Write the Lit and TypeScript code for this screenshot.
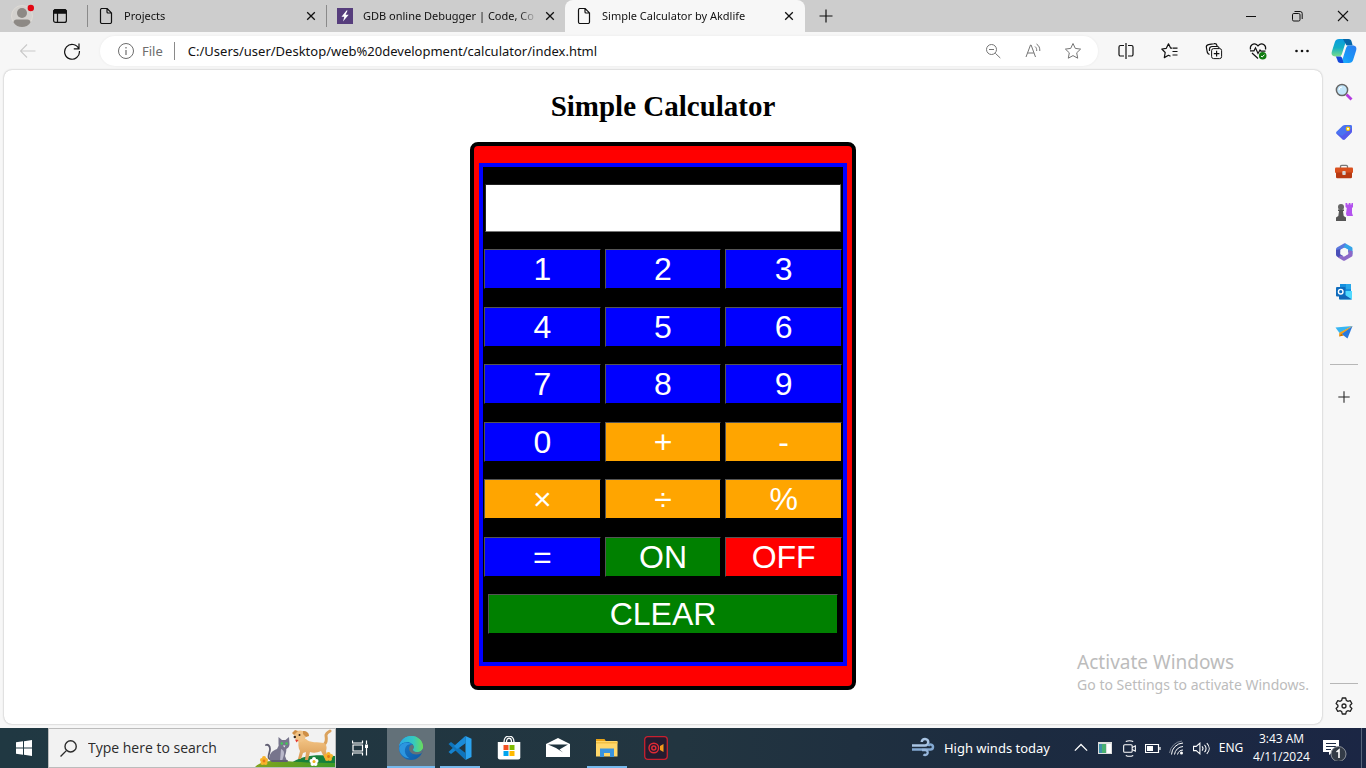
import { LitElement, html, css, svg } from "lit";
import { customElement, property, state } from "lit/decorators.js";
import { classMap } from "lit/directives/class-map.js";

const icon = (size: number, body: unknown, view = 16) => html`
  <svg class="icon" width=${size} height=${size} viewBox="0 0 ${view} ${view}" fill="none"
    stroke="currentColor" stroke-width="1" aria-hidden="true">${body}</svg>`;

const shared = css`
  :host, * { box-sizing: border-box; }
  .icon { display: block; flex: none; }
  button {
    font: inherit; color: inherit; background: none; border: 0; padding: 0; margin: 0;
    display: flex; align-items: center; justify-content: center; flex: none;
  }
  input { font: inherit; color: inherit; border: 0; padding: 0; margin: 0; background: none; outline: 0; min-width: 0; border-radius: 0; }
`;

const glyph = {
  page: svg`<path d="M3.500 .5h5.600l4.400 4.400v9.100a1.500 1.500 0 0 1-1.500 1.500H4A1.500 1.500 0 0 1 2.500 14V2A1.500 1.500 0 0 1 4 .5M9 .7v3.300a1 1 0 0 0 1 1h3.400" stroke-width="1.200"/>`,
  bolt: svg`<rect width="16" height="16" fill="#563d7c" stroke="none"/><path d="M9.500 2.500 4.500 8.700h2.800L6 13.600l5.700-6.800H8.600l2-4.300z" fill="#fff" stroke="none"/>`,
  close: svg`<path d="m4.200 4.200 7.600 7.600m0-7.600-7.600 7.600" stroke-width="1.300"/>`,
  plus: svg`<path d="M8 1.500v13M1.500 8h13" stroke-width="1.200"/>`,
};

@customElement("calc-pad")
export class CalcPad extends LitElement {
  @state() private value = "";
  @state() private on = true;

  static styles = [shared, css`
    :host {
      display: block; width: 386px; max-width: 100%; background: red; color: white;
      border: 4px solid black; border-radius: 8px; padding: 17px 5px 20px;
      font: 32px/38px "Liberation Sans", Arial, sans-serif;
    }
    .body { background: black; border: 4px solid blue; padding: 17px 1px 28px; }
    .display {
      display: block; width: calc(100% - 2px); height: 48px; margin: 0 1px 17px;
      background: white; color: black; border: 1px inset #767676; text-align: right;
    }
    .keys {
      display: grid; grid-template-columns: repeat(3, 1fr); grid-auto-rows: 40px;
      column-gap: 4px; height: 385px; align-content: space-between;
    }
    .key { border: 1px outset black; background: blue; }
    .operator { background: orange; }
    .go { background: green; }
    .stop { background: red; }
    .wide { grid-column: 1 / -1; margin: 0 4px; }
  `];

  private press(key: string) {
    if (key === "ON") { this.on = true; return; }
    if (key === "OFF") { this.on = false; this.value = ""; return; }
    if (!this.on) return;
    if (key === "CLEAR") this.value = "";
    else if (key === "=") this.value = this.evaluate();
    else this.value += key;
  }

  private evaluate(): string {
    const tokens = this.value.match(/\d+|[+\-×÷%]/g);
    if (!tokens) return "";
    let total = Number(tokens[0]);
    for (let i = 1; i + 1 < tokens.length; i += 2) {
      const n = Number(tokens[i + 1]);
      if (tokens[i] === "+") total += n;
      else if (tokens[i] === "-") total -= n;
      else if (tokens[i] === "×") total *= n;
      else if (tokens[i] === "÷") total /= n;
      else total %= n;
    }
    return String(total);
  }

  render() {
    const keys = ["1", "2", "3", "4", "5", "6", "7", "8", "9", "0", "+", "-", "×", "÷", "%", "=", "ON", "OFF", "CLEAR"];
    return html`<div class="body">
      <input class="display" aria-label="Result" .value=${this.value} readonly>
      <div class="keys">
        ${keys.map((k) => html`<button @click=${() => this.press(k)} class=${classMap({
          key: true,
          operator: "+-×÷%".includes(k),
          go: k === "ON" || k === "CLEAR",
          stop: k === "OFF",
          wide: k === "CLEAR",
        })}>${k}</button>`)}
      </div>
    </div>`;
  }
}

@customElement("browser-tab")
export class BrowserTab extends LitElement {
  @property() label = "";
  @property() kind = "page";
  @property({ type: Boolean, reflect: true }) active = false;

  static styles = [shared, css`
    :host { display: flex; align-items: center; flex: 0 1 239px; height: 32px; min-width: 0; padding: 0 7px 0 10px; border-left: 1px solid #8a8a8a;
      border-image: linear-gradient(transparent 6px, #8a8a8a 6px, #8a8a8a 26px, transparent 26px) 1; border-width: 0 0 0 1px; }
    :host([active]) { background: #f7f7f7; border: 0; border-image: none; border-radius: 8px 8px 0 0; padding: 0 8px 0 11px; flex-basis: 240px; }
    .title { flex: 1; min-width: 0; justify-content: flex-start; margin-left: 10px; overflow: hidden; white-space: nowrap; height: 20px;
      mask-image: linear-gradient(90deg, black calc(100% - 20px), transparent); }
    .close { width: 16px; height: 16px; margin-left: 4px; }
  `];

  render() {
    return html`${icon(16, this.kind === "bolt" ? glyph.bolt : glyph.page)}
      <button class="title">${this.label}</button>
      <button class="close" aria-label="Close ${this.label}">${icon(16, glyph.close)}</button>`;
  }
}

@customElement("tab-strip")
export class TabStrip extends LitElement {
  static styles = [shared, css`
    :host { display: flex; align-items: center; height: 32px; background: #cdcdcd; color: #111; font: 11px/20px "Noto Sans", "Open Sans", sans-serif; }
    .profile { width: 44px; }
    .workspaces { width: 32px; margin-right: 11px; }
    .tabs { display: flex; flex: 0 1 718px; min-width: 0; }
    .new { width: 42px; }
    .window { display: flex; margin-left: auto; }
    .window button { width: 46px; height: 32px; }
  `];

  render() {
    return html`
      <button class="profile" aria-label="Profile">${icon(24, svg`
        <circle cx="12" cy="12" r="10.500" fill="#d3d1ce" stroke="#dedbd6"/>
        <circle cx="12" cy="9" r="5" fill="#8d8985" stroke="none"/>
        <path d="M3.500 18.500c0-2 1.500-3 3-3h11c1.500 0 3 1 3 3-2 3-5 4.500-8.500 4.500s-6.500-1.500-8.500-4.500z" fill="#8d8985" stroke="none"/>
        <circle cx="20.800" cy="4" r="3.200" fill="#e30613" stroke="none"/>`, 24)}</button>
      <button class="workspaces" aria-label="Tab actions">${icon(16, svg`
        <rect x="1.600" y="1.600" width="12.800" height="12.800" rx="2" stroke-width="1.200"/>
        <path d="M1.500 5.200V3.500a2 2 0 0 1 2-2h9a2 2 0 0 1 2 2v1.700z" fill="currentColor"/><path d="M5.500 5v9.500" stroke-width="1.200"/>`)}</button>
      <nav class="tabs">
        <browser-tab label="Projects"></browser-tab>
        <browser-tab label="GDB online Debugger | Code, Co" kind="bolt"></browser-tab>
        <browser-tab label="Simple Calculator by Akdlife" active></browser-tab>
      </nav>
      <button class="new" aria-label="New tab">${icon(16, glyph.plus)}</button>
      <div class="window">
        <button aria-label="Minimize">${icon(16, svg`<path d="M3 8.500h10"/>`)}</button>
        <button aria-label="Restore">${icon(16, svg`<rect x="3.500" y="5.500" width="7.500" height="7.500" rx="1.300"/><path d="M5.500 3.500h5.700a2 2 0 0 1 2 2v5.500"/>`)}</button>
        <button aria-label="Close">${icon(16, svg`<path d="m3 3 10 10m0-10L3 13" stroke-width="1.100"/>`)}</button>
      </div>`;
  }
}

const copilot = svg`
  <defs>
    <linearGradient id="ca" x1="0" y1="0" x2="0" y2="1"><stop stop-color="#0a9be0"/><stop offset=".5" stop-color="#12afc4"/><stop offset="1" stop-color="#79dc8b"/></linearGradient>
    <linearGradient id="cb" x1="1" y1="0" x2="0" y2="1"><stop stop-color="#2b7cf0"/><stop offset=".6" stop-color="#1897f8"/><stop offset="1" stop-color="#20b9ff"/></linearGradient>
  </defs>
  <g stroke="none">
    <path d="M7.500 1H16l-2.500 3L10 15c-.6 1.500-1.500 2-3 2H4c-3 0-4-2-3.200-4.500L3.500 4c.7-2 2-3 4-3z" fill="url(#ca)"/>
    <path d="M11 1h5c2 0 2.700 1 3.200 3l.8 3h-4c-1.500 0-2.200-.5-2.700-2z" fill="#0666a8"/>
    <path d="M16.500 23H8l2.500-3L14 9c.6-1.500 1.500-2 3-2h3c3 0 4 2 3.200 4.500L20.500 20c-.7 2-2 3-4 3z" fill="url(#cb)"/>
    <path d="M4.500 17H8c1.500 0 2 .5 2.500 2l1 4H9c-2 0-2.700-1-3.200-3z" fill="#1448d8"/>
  </g>`;

@customElement("address-bar")
export class AddressBar extends LitElement {
  static styles = [shared, css`
    :host { display: flex; align-items: center; height: 38px; background: #f7f7f7; color: #111; font: 13px/20px "Noto Sans", "Open Sans", sans-serif; }
    .back { width: 56px; color: #c9c9c9; }
    .reload { width: 32px; }
    .field { flex: 1; min-width: 0; display: flex; align-items: center; height: 30px; margin: 0 6px 0 12px; padding: 0 5px 0 17px;
      background: white; border-radius: 15px; box-shadow: 0 0 3px #0000000f; }
    .scheme { display: flex; align-items: center; color: #6d6d6d; gap: 7px; padding-right: 11px; border-right: 1px solid #8a8a8a; line-height: 16px; }
    .url { flex: 1; margin-left: 13px; }
    .inner { width: 40px; color: #757575; }
    .tool { width: 44px; }
    .copilot { width: 42px; justify-content: flex-start; padding-left: 7px; }
  `];

  render() {
    return html`
      <button class="back" aria-label="Back">${icon(16, svg`<path d="M15.500 8H.8M7 1.500.5 8 7 14.500" stroke-width="1.100"/>`)}</button>
      <button class="reload" aria-label="Refresh">${icon(18, svg`<path d="M15.800 6.800A7.400 7.400 0 1 0 16.400 9M16 1.500v5.300h-5.200" stroke-width="1.200"/>`, 18)}</button>
      <div class="field">
        <span class="scheme">${icon(18, svg`<circle cx="9" cy="9" r="7.500"/><path d="M9 8v5M9 5v1.400" stroke-width="1.200"/>`, 18)}File</span>
        <input class="url" aria-label="Address" value="C:/Users/user/Desktop/web%20development/calculator/index.html">
        <button class="inner" aria-label="Zoom out">${icon(16, svg`<circle cx="6.500" cy="6.500" r="5"/><path d="M4 6.500h5m1.300 3.800 5 4.700"/>`)}</button>
        <button class="inner" aria-label="Read aloud">${icon(16, svg`<path d="m1 14 4.500-12h.6L10.500 14M2.600 10h6.200M10 3.500c1.300 1 1.800 2.600 1.700 4.500M11.500 1c2.400 1.600 3.500 3.800 3.300 7"/>`)}</button>
        <button class="inner" aria-label="Favourite">${icon(18, svg`<path d="m9 1.500 2.300 4.900 5.300.7-3.900 3.700 1 5.400L9 13.600l-4.700 2.600 1-5.400L1.400 7.100l5.300-.7z" stroke-linejoin="round"/>`, 18)}</button>
      </div>
      <button class="tool" aria-label="Split screen">${icon(18, svg`<path d="M9 1v16M7 3.500H3.500a1.500 1.500 0 0 0-1.500 1.500v7.500A1.500 1.500 0 0 0 3.500 14H7M11 3.500h3.500A1.500 1.500 0 0 1 16 5v7.500a1.500 1.500 0 0 1-1.500 1.500H11" stroke-width="1.200"/>`, 18)}</button>
      <button class="tool" aria-label="Favourites">${icon(18, svg`<path d="M11.500 6.200h5M11.500 9.500h5M11.500 13h5M11 6.200H9.700L7.500 1.800 5.300 6.300l-4.500.7 3.400 3.500-.9 5.100 4.200-2.300 2 1" stroke-width="1.200" stroke-linejoin="round"/>`, 18)}</button>
      <button class="tool" aria-label="Collections">${icon(18, svg`<rect x="6.600" y="6.600" width="10" height="10" rx="2"/><path d="M11.600 8.800v5.600M8.800 11.600h5.600M4.500 12.500C3 12 2.500 11.300 2.200 10L1.400 5.500C1.100 4 2 2.900 3.500 2.600l5.500-.9c1.500-.3 2.700.4 3 1.900l.1.700M4.500 9V7a2.500 2.500 0 0 1 2.500-2.500h5c1.300 0 2 .5 2.300 1.800" stroke-width="1.200"/>`, 18)}</button>
      <button class="tool" aria-label="Browser essentials">${icon(18, svg`<path d="M1.500 7.500C.5 3.500 4.500 .5 7.500 2.500L9 4l1.500-1.500c3-2 7 1 6 5M1 8.800h4l1.500-3L9 11.500l2-3.500 1 1.200h4.500M3 11l6 5.500" stroke-width="1.200"/><circle cx="13.700" cy="13.700" r="3.800" fill="#107c10" stroke="none"/><path d="m12 14 1.200 1 2.300-2.400" stroke="#fff"/>`, 18)}</button>
      <button class="tool" aria-label="Settings and more">${icon(16, svg`<g fill="currentColor" stroke="none"><circle cx="2.500" cy="8" r="1.300"/><circle cx="8" cy="8" r="1.300"/><circle cx="13.500" cy="8" r="1.300"/></g>`)}</button>
      <button class="copilot" aria-label="Copilot">${icon(26, copilot, 24)}</button>`;
  }
}

const sideIcons: [string, unknown][] = [
  ["Search", svg`<path d="m11.500 11.500 5 5" stroke="#b43be0" stroke-width="2.800"/><circle cx="7" cy="7" r="5.600" fill="#c3e6fa" stroke="#666" stroke-width="1.500"/><path d="M4 7a3 3 0 0 1 3-3" stroke="#fff"/>`],
  ["Shopping", svg`<path d="M10 2h5.500c1 0 1.500.5 1.500 1.500V8c0 1-.3 1.500-1 2.200l-6 6c-.8.800-1.700.8-2.500 0L1.700 11c-.8-.8-.8-1.700 0-2.500l6-5.700C8.400 2.200 9 2 10 2z" fill="#4b73f1" stroke="none"/><path d="m1.300 10 6.500 6.700c.8.300 1.500.2 2.200-.5l6-6c.7-.7 1-1.200 1-2.200V5L7 13z" fill="#6048e8" stroke="none" opacity=".55"/><circle cx="13" cy="5.800" r="1.700" fill="#fff" stroke="#f5c400" stroke-width="1.200"/>`],
  ["Tools", svg`<path d="M5.500 5V3.500c0-.8.400-1.200 1.200-1.200h4.600c.8 0 1.200.4 1.200 1.200V5" stroke="#777" stroke-width="1.300"/><rect y="4.500" width="18" height="5.500" rx="1" fill="#d9501e" stroke="none"/><path d="M1 9.500h16V14a1.300 1.300 0 0 1-1.300 1.300H2.300A1.300 1.300 0 0 1 1 14z" fill="#b83a12" stroke="none"/><rect x="7.300" y="8" width="3.400" height="4" rx=".8" fill="#d5d5d5" stroke="none"/>`],
  ["Games", svg`<g stroke="none"><path d="M10.500 0h1.800v1.500h1.400V0h1.800v1.500h1V0h1.500v4l-1 1v5l1 3h-6l-1-2 .8-6-1.300-1z" fill="#b352ee"/><circle cx="6" cy="4" r="3" fill="#666"/><path d="M3 6.500h6v1.400H8l.7 5 2.300 1.600V18H1v-3.500l2.300-1.600.7-5H3z" fill="#555"/></g>`],
  ["Microsoft 365", svg`<g stroke="none"><path d="M9 .5 2.300 4.300C1.400 4.900 1 5.600 1 6.600V11l4.700-2V7l5.300-3V.8C10.300.2 9.600.2 9 .5z" fill="#5b78dd"/><path d="M1 7v4.500c0 1 .5 1.700 1.300 2.200l2.200 1.200L9 12.500 5.700 11V6z" fill="#4a4fb8"/><path d="m11 .8 5.700 3.300c.5.300.8.800.8 1.500v6L13 9V6.500L8.500 4z" fill="#35a4e8"/><path d="M17.500 8v4.200c0 .8-.4 1.200-1 1.600L10 17.500c-.7.400-1.300.4-2 0l-5-3 2.700-2L9 13.500l4.300-2.500V7z" fill="#8d68c8"/><path d="m9 4.800 3.800 2v4.400L9 13.400l-3.700-2.200V6.800z" fill="#f7f7f7"/></g>`],
  ["Outlook", svg`<g stroke="none"><rect x="5" y="1" width="11" height="10" fill="#1490df"/><path d="M11 1h5v5h-5z" fill="#28a8ea"/><path d="M4 8h13v7.500a1 1 0 0 1-1 1H5a1 1 0 0 1-1-1z" fill="#50d9ff"/><path d="m4 8 13 8.500H5a1 1 0 0 1-1-1z" fill="#1266b7"/><rect x="1" y="4" width="9.500" height="9.500" rx="1" fill="#0f6cbd"/></g><circle cx="5.700" cy="8.700" r="2.300" stroke="#fff" stroke-width="1.400"/>`],
  ["Drop", svg`<g stroke="none"><path d="m.5 4.500 17-1.500-13 7z" fill="#37b5f2"/><path d="m17.500 3-13 7-.3 3.500z" fill="#f0a020"/><path d="m17.500 3-11 8 6 4.500z" fill="#2879df"/><path d="m17.500 3-11 8-2.300 2.500.3-3.800z" fill="#f0a020"/><path d="m4.200 13.500 2.300-2.700 2.200 1.700z" fill="#c66f00"/></g>`],
];

@customElement("side-bar")
export class SideBar extends LitElement {
  static styles = [shared, css`
    :host { display: flex; flex-direction: column; align-items: center; width: 44px; color: #222; padding: 2px 0; }
    .item { width: 40px; height: 40px; }
    .rule { width: 28px; height: 1px; background: #b7b7b7; margin: 12px 0; }
    .foot { margin: auto 0 2px; }
  `];
  render() {
    return html`
      ${sideIcons.map(([name, body]) => html`<button class="item" aria-label=${name}>${icon(18, body, 18)}</button>`)}
      <div class="rule"></div>
      <button class="item" aria-label="Customize">${icon(14, glyph.plus)}</button>
      <div class="rule foot"></div>
      <button class="item" aria-label="Settings">${icon(18, svg`<path d="M7.300 1h3.400l.6 2.400 1.500.9 2.400-.7 1.700 2.900-1.800 1.700v1.600l1.800 1.700-1.700 2.900-2.400-.7-1.500.9-.6 2.400H7.300l-.6-2.400-1.500-.9-2.400.7-1.700-2.900 1.800-1.700V8.200L1.100 6.500l1.700-2.900 2.400.7 1.500-.9z" stroke-width="1.300" stroke-linejoin="round"/><circle cx="9" cy="9" r="2" stroke-width="1.300"/>`, 18)}</button>`;
  }
}

const petScene = html`<svg class="pets" width="80" height="38" viewBox="0 0 80 38" aria-hidden="true">
  <defs>
    <linearGradient id="grass"><stop stop-color="#82a51f"/><stop offset="1" stop-color="#3f9b27"/></linearGradient>
    <linearGradient id="coat" x2="0" y2="1"><stop stop-color="#f2c384"/><stop offset="1" stop-color="#d99a52"/></linearGradient>
  </defs>
  <path d="M34 36c10-10 28-11 46-9v11H34z" fill="#16803c"/>
  <path d="M0 38c6-6 16-7 28-6 14 1 32 2 52 2v4z" fill="url(#grass)"/>
  <path d="M16 31c-5-2-1-7-1-11 0-3-2-5-4-4" fill="none" stroke="#605e72" stroke-width="1.800" stroke-linecap="round"/>
  <path d="M15 32c-2-7 2-10 7-12l2-4h7c1 4 0 8-1 11l2 5z" fill="#77758c"/>
  <path d="m23.500 8 3.500 3h3.500l3.500-3 .5 7c0 3-2 5-5 5s-6-2-6-5z" fill="#77758c"/>
  <path d="M26 20c3 1 4 4 2 9l-1 3h-2z" fill="#b9b8ca"/>
  <path d="M28 16.500h2.500l-1.200 2z" fill="#e8e6f0"/>
  <circle cx="26.800" cy="14.500" r="1.200" fill="#3fce54"/><circle cx="31.500" cy="14.500" r="1.200" fill="#3fce54"/>
  <path d="M17 32h15" stroke="#605e72" stroke-width="2" stroke-linecap="round"/>
  <path d="M68 16c5-2 3-7 3-10 1-3 3-3 4-4" fill="none" stroke="#dba25c" stroke-width="3" stroke-linecap="round"/>
  <path d="M44 10h7c3 4 13 3 18 4 3 2 3 5 2 8l2 8h-3l-4-8c-4 2-8 2-11 1l-2 8h-3l1-8-3 1-2 6h-3l2-8c-2-3-2-8-1-12z" fill="url(#coat)"/>
  <path d="M39 5c1-4 9-5 11-1 2 5-1 9-5 9-2 0-3-1-4-2z" fill="#f0c285"/>
  <path d="m39 6-2-2 3-3 3 1zM48 2c4 0 6 2 6 5l-3 1-3-3z" fill="#cf8f46"/>
  <circle cx="44.500" cy="6" r="1" fill="#30241c"/><circle cx="39.800" cy="8" r="1.200" fill="#30241c"/><path d="m40 10.500 1.500 3 2-2.500z" fill="#e43c32"/>
  <g fill="#f7b32b"><circle cx="7" cy="31" r="2"/><circle cx="11" cy="31" r="2"/><circle cx="9" cy="29" r="2"/><circle cx="7.500" cy="34" r="2"/><circle cx="10.500" cy="34" r="2"/>
  <circle cx="71" cy="27" r="2"/><circle cx="76" cy="27" r="2"/><circle cx="73.500" cy="25" r="2"/><circle cx="72" cy="30" r="2"/><circle cx="75" cy="30" r="2"/></g>
  <circle cx="9" cy="32" r="1.400" fill="#e77817"/><circle cx="73.500" cy="27.500" r="1.400" fill="#e77817"/>
  <g fill="#fff"><circle cx="56.500" cy="32" r="2"/><circle cx="61.500" cy="32" r="2"/><circle cx="59" cy="30" r="2"/><circle cx="57.500" cy="35" r="2"/><circle cx="60.500" cy="35" r="2"/></g><circle cx="59" cy="32.500" r="1.500" fill="#f2b51c"/>
</svg>`;

const apps: [string, string, unknown][] = [
  ["Edge", "active", svg`<defs><linearGradient id="ea" x1="0" y1=".3" x2="1" y2=".3"><stop stop-color="#2aa9e8"/><stop offset=".6" stop-color="#35c9c0"/><stop offset="1" stop-color="#6bdc5a"/></linearGradient><linearGradient id="eb" x2="1" y2="1"><stop stop-color="#1b7fd0"/><stop offset="1" stop-color="#0f5aa5"/></linearGradient></defs>
    <g stroke="none"><circle cx="12" cy="12" r="12" fill="url(#eb)"/><path d="M.2 10C1.500 4 6.500 0 12.200 0 19 0 24 5 24 10.800c0 3.300-2.800 5.200-5.600 5.200-2.700 0-4.300-1-4.300-2.200 0-.7.900-1.100.9-2.800C15 8 11.500 6 8 6 4.500 6 1.500 7.500.2 10z" fill="url(#ea)"/><path d="M8.500 9c-4 3-3.500 10 2 13.300-5.500 0-10.200-4.500-10.300-10C.5 9 4 6.500 8 6.700c2 .1 4 .8 5.200 1.800C11.500 8 9.800 8.100 8.500 9z" fill="#2c96df"/><path d="M13.200 8.500c-3 1-4 4-2.200 7 1.800 3 6.500 4.200 11.500 1.800l1.500-3V11c0 3.300-2.800 5-5.600 5-2.700 0-4.300-1-4.300-2.200 0-.7.900-1.100.9-2.800 0-1-.7-2-1.800-2.500z" fill="#637179"/><path d="M.2 10C1.500 4 6.500 0 12.200 0 19 0 24 5 24 10.800c0 3.300-2.800 5.200-5.600 5.200-2.700 0-4.300-1-4.300-2.200 0-.7.900-1.100.9-2.800C15 8 11.500 6 8 6 4.500 6 1.500 7.500.2 10z" fill="url(#ea)"/></g>`],
  ["Visual Studio Code", "open", svg`<g stroke="none"><path d="m17.500 0 6 2.700V21l-6 3z" fill="#2aa3f0"/><path d="M17.500 0v7L3 18 .5 16z" fill="#1583cf"/><path d="m.5 8 2.500-2 14.500 11v7z" fill="#0f75bd"/><path d="M17.500 0v7L9 13l-3-3z" fill="#1b8bd8"/></g>`],
  ["Store", "", svg`<g stroke="none"><path d="M.8 6h22.500v15.500a2 2 0 0 1-2 2h-18.500a2 2 0 0 1-2-2z" fill="#fff"/><path fill="#f25022" d="M6.500 9h5v5h-5z"/><path fill="#7fba00" d="M12.500 9h5v5h-5z"/><path fill="#00a4ef" d="M6.500 15h5v5h-5z"/><path fill="#ffb900" d="M12.500 15h5v5h-5z"/></g><path d="M7 6c0-8 10-8 10 0M9.500 6c0-5 5-5 5 0" stroke="#fff" stroke-width="1.300"/>`],
  ["Mail", "", svg`<g stroke="none"><path d="m0 8 12-6 12 6v13H0z" fill="#fff"/><path d="M2 8.500h20l-8.500 5 3.500 3-7-4.500z" fill="#20343f"/></g>`],
  ["File Explorer", "open", svg`<g stroke="none"><path d="M1 3h8.500l1.500 2.500H1z" fill="#e8a317"/><path d="M1 5h21.500v15.500H1z" fill="#ffd76a"/><path d="M1 6h21.500v1.500H1z" fill="#f0bf45"/><path d="M5 12.500h14V21h-4v-4H9v4H5z" fill="#3a94df"/></g>`],
  ["Recorder", "", svg`<rect x=".7" y=".7" width="22.600" height="22.600" rx="3" fill="#251c30" stroke="#c8202f" stroke-width="1.300"/><circle cx="9.800" cy="12" r="4.800" stroke="#e02a35" stroke-width="1.400"/><circle cx="9.800" cy="12" r="2" stroke="#e02a35" stroke-width="1.500"/><path d="m16 10 3.500-2v8L16 14z" fill="#f39a1d" stroke="none"/>`],
];

@customElement("task-bar")
export class TaskBar extends LitElement {
  static styles = [shared, css`
    :host { display: flex; height: 40px; color: white; background: linear-gradient(90deg, #203842, #223540 50%, #1c2b40 75%, #1b2644);
      font: 13px/20px "Noto Sans", "Open Sans", sans-serif; }
    .start, .view { width: 48px; }
    .search { display: flex; align-items: center; width: 288px; padding-left: 11px; background: #f2f2f2; border: 1px solid #bcbcbc; color: #2b2b2b; }
    .search input { flex: 1; margin-left: 11px; font: 14px/20px "Open Sans", "Noto Sans", sans-serif; }
    .search input::placeholder { color: #2b2b2b; opacity: 1; }
    .pets { flex: none; }
    .apps { display: flex; gap: 1px; margin-left: 3px; }
    .app { width: 48px; }
    .open { border-bottom: 2px solid #76b9ed; padding-top: 2px; width: 40px; margin: 0 4px; }
    .active { border-bottom: 2px solid #76b9ed; padding-top: 2px; background: #637179; }
    .tray { display: flex; align-items: center; margin-left: auto; }
    .tray button { height: 40px; }
    .weather { gap: 9px; margin-right: 19px; }
    .small { width: 24px; }
    .lang { width: 36px; font-size: 12px; }
    .clock { width: 65px; flex-direction: column; font: 12px/18px "Open Sans", "Noto Sans", sans-serif; }
    .notes { width: 39px; }
    .desktop { width: 13px; justify-content: flex-start; padding-left: 8px; }
    .desktop::before { content: ""; width: 1px; height: 40px; background: #58647a; }
  `];

  render() {
    return html`
      <button class="start" aria-label="Start">${icon(16, svg`<path d="M0 2.300 7 1.300v6.300H0zM8 1.200 16 0v7.600H8zM0 8.500h7v6.300l-7-1zM8 8.500h8V16l-8-1.200z" fill="#fff" stroke="none"/>`)}</button>
      <label class="search">${icon(17, svg`<circle cx="10" cy="6" r="5.300" stroke-width="1.300"/><path d="M6 10 .5 15.500" stroke-width="1.300"/>`)}
        <input aria-label="Search" placeholder="Type here to search">${petScene}</label>
      <button class="view" aria-label="Task view">${icon(16, svg`<path d="M.5.500v2.500h10V.500M.5 15.500V13h10v2.500M1 5h9.500v6H1zM14.500.500V4M14.500 8v7.500" stroke-width="1.200"/><path d="M13 4.500h3V8h-3z" fill="#fff" stroke="none"/>`)}</button>
      <nav class="apps">${apps.map(([name, mode, body]) => html`<button class="app ${mode}" aria-label=${name}>${icon(24, body, 24)}</button>`)}</nav>
      <div class="tray">
        <button class="weather">${icon(24, svg`<path d="M1 9.500h13a3.300 3.300 0 1 0-3.300-3.500" stroke="#a9c5e4" stroke-width="2.500"/><path d="M1 13.500h18.500a2.500 2.500 0 1 0-2.300-3.500" stroke="#84a9d2" stroke-width="2.500"/><path d="M11 14h3a2.500 2.500 0 1 1-1.500 4.300" stroke="#96b6db" stroke-width="2.300"/>`, 24)}High winds today</button>
        <button class="small" aria-label="Show hidden icons">${icon(14, svg`<path d="m1 11 7-7 7 7" stroke-width="1.500"/>`)}</button>
        <button class="small" aria-label="Display">${icon(16, svg`<g stroke="none"><path fill="#ddd" d="M1 2h14v12H1z"/><path fill="#3e8fa8" d="M2 4h7v9H2z"/><path fill="#4ab070" d="M5 4h4v9H5z"/><path fill="#fff" d="M10 4h4v9h-4z"/></g>`)}</button>
        <button class="small" aria-label="Meet now">${icon(17, svg`<rect x="2.500" y="4.500" width="8" height="7" rx="1"/><path d="m10.500 7 3-1.500v5l-3-1.500M4.500 1.500c2-1 5-1 7 0M4.500 14.500c2 1 5 1 7 0"/>`)}</button>
        <button class="small" aria-label="Battery">${icon(16, svg`<path d="M.5 4.500h13v8H.5zM15 7v3" stroke-width="1.200"/><path d="M2 6h6v5H2z" fill="#fff" stroke="none"/>`)}</button>
        <button class="small" aria-label="Wi-Fi">${icon(16, svg`<path d="M2.500 14.500A12 12 0 0 1 14 3M5.500 14.500A9 9 0 0 1 14 6.500M8.500 14.500A6 6 0 0 1 14 10"/><path d="M.5 13A14 14 0 0 1 13 1" opacity=".4"/><circle cx="12.500" cy="13" r="1.500" fill="#fff" stroke="none"/>`)}</button>
        <button class="small" aria-label="Volume">${icon(17, svg`<path d="M.5 6H3l3.500-3v10L3 10H.5zM8.500 6c1 1.200 1 3 0 4M10.800 4.500c2 2 2 5 0 7M13 3c3 3 3 7 0 10"/>`)}</button>
        <button class="lang">ENG</button>
        <button class="clock"><span>3:43 AM</span><span>4/11/2024</span></button>
        <button class="notes" aria-label="Notifications">${icon(26, svg`<path d="M2 5h16v12h-6l-4 3v-3H2z" fill="#fff" stroke="none"/><path d="M5 8.500h10M5 11.500h10M5 14.500h5" stroke="#1c2a44"/><circle cx="17.500" cy="19" r="7.500" fill="#333b47" stroke="#8d929b"/><path d="m15.500 17 2.500-2v8" stroke="#fff" stroke-width="1.600"/>`, 26)}</button>
        <button class="desktop" aria-label="Show desktop"></button>
      </div>`;
  }
}

@customElement("app-root")
export class AppRoot extends LitElement {
  static styles = css`
    :host { display: flex; flex-direction: column; min-height: 100vh; background: #f7f7f7; }
    .middle { flex: 1; display: flex; }
    .page { position: relative; flex: 1; min-width: 0; display: flex; flex-direction: column; align-items: center;
      margin: 0 0 4px 4px; padding: 20px 8px 34px; background: white; border-radius: 8px; box-shadow: 0 0 2px #00000055; box-sizing: border-box; }
    h1 { margin: 0 0 19px; font: bold 29px/33px "Liberation Serif", "Times New Roman", serif; color: black; }
    .notice { position: absolute; right: 13px; bottom: 29px; color: #bcbcbc; font: 14px/20px "Noto Sans", "Open Sans", sans-serif; pointer-events: none; }
    .notice p { margin: 0; }
    .notice .big { font-size: 19px; line-height: 26px; }
  `;

  render() {
    return html`
      <tab-strip></tab-strip>
      <address-bar></address-bar>
      <div class="middle">
        <main class="page">
          <h1>Simple Calculator</h1>
          <calc-pad></calc-pad>
          <aside class="notice"><p class="big">Activate Windows</p><p>Go to Settings to activate Windows.</p></aside>
        </main>
        <side-bar></side-bar>
      </div>
      <task-bar></task-bar>`;
  }
}
